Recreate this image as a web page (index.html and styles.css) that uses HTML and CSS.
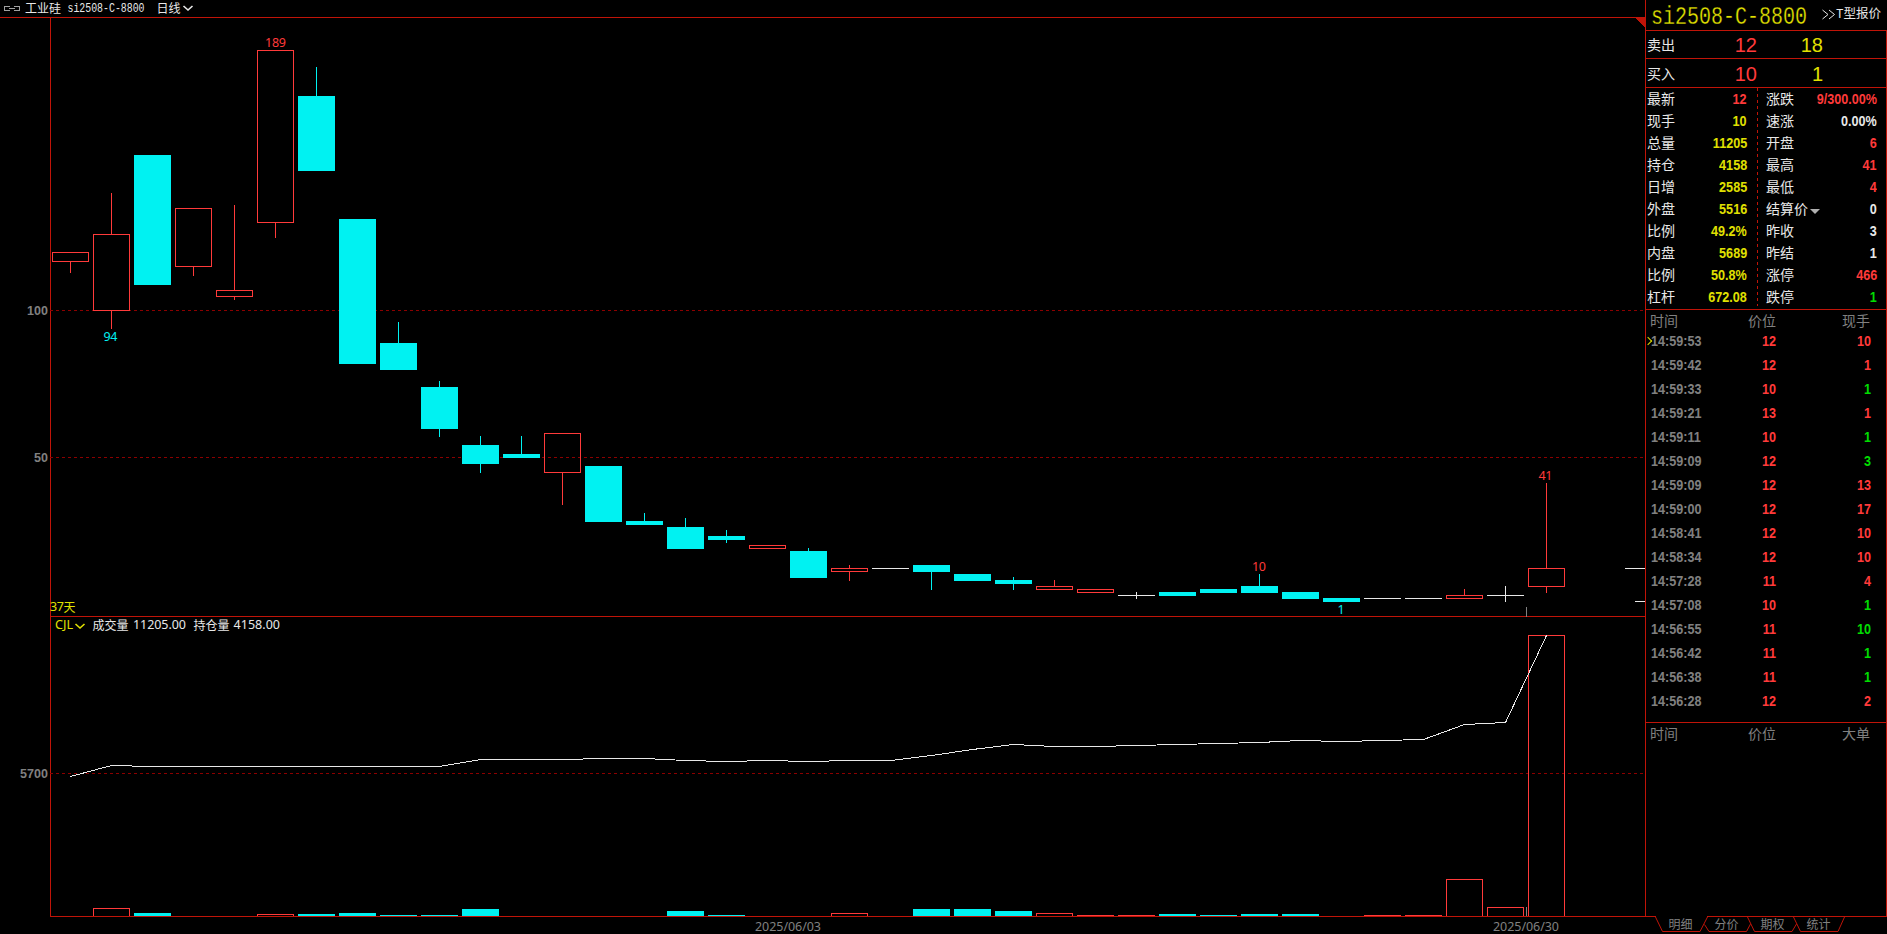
FILE: index.html
```html
<!DOCTYPE html>
<html lang="zh-CN">
<head>
<meta charset="utf-8">
<title>si2508-C-8800</title>
<link rel="stylesheet" href="styles.css">
</head>
<body>
<div class="app">
  <main class="main">
    <section class="chart-pane">
      <svg class="chart" width="1645" height="917" viewBox="0 0 1645 917">
        <!-- header -->
        <g class="link-icon"><path d="M10 6.500H4.500V10.500H10M14 6.500H19.500V10.500H14M9 8.500H15"/></g>
        <text class="cjk white" x="25" y="12.500" textLength="36">工业硅</text>
        <text class="code white" x="67.500" y="12" textLength="77" lengthAdjust="spacingAndGlyphs">si2508-C-8800</text>
        <text class="cjk white" x="156.500" y="12.500" textLength="24">日线</text>
        <path class="chevron white-line" d="M183.500 6L188 10L192.500 6"/>
        <!-- frame and grid -->
        <path class="frame" d="M0 17.500H1645M50.500 17V917M50 616.500H1645M50 916.500H1645"/>
        <path class="flag" d="M1635 17H1645V28Z"/>
        <path class="grid" d="M50 310.500H1643M50 457.500H1643M50 773.500H1643"/>
        <text class="axis" x="27" y="315" textLength="21">100</text>
        <text class="axis" x="34" y="462" textLength="14">50</text>
        <text class="axis" x="20" y="778" textLength="28">5700</text>
        <!-- falling candles -->
        <path class="down" d="M134 155h37v130h-37zM298 96h37v75h-37zM339 219h37v145h-37zM380 343h37v27h-37zM421 387h37v42h-37zM462 445h37v19h-37zM503 454h37v4h-37zM585 466h37v56h-37zM626 521h37v4h-37zM667 527h37v22h-37zM708 536h37v4h-37zM790 551h37v27h-37zM913 565h37v7h-37zM954 574h37v7h-37zM995 580h37v4h-37zM1159 592h37v4h-37zM1200 589h37v4h-37zM1241 586h37v7h-37zM1282 592h37v7h-37zM1323 598h37v4h-37z"/>
        <path class="down-line" d="M316.500 67V96M398.500 322V343M439.500 381V437M480.500 436V473M521.500 436V454M644.500 513V521M685.500 518V527M726.500 530V543M808.500 548V551M931.500 572V590M1013.500 577V590M1259.500 574V586"/>
        <!-- rising candles -->
        <path class="up" d="M52.500 252.500h36v9h-36zM93.500 234.500h36v76h-36zM175.500 208.500h36v58h-36zM216.500 290.500h36v6h-36zM257.500 50.500h36v172h-36zM544.500 433.500h36v39h-36zM749.500 545.500h36v3h-36zM831.500 568.500h36v3h-36zM1036.500 586.500h36v3h-36zM1077.500 589.500h36v3h-36zM1446.500 595.500h36v3h-36zM1528.500 568.500h36v18h-36z"/>
        <path class="up" d="M70.500 262V273M111.500 193V234M111.500 311V329M193.500 267V276M234.500 205V290M234.500 297V300M275.500 223V238M562.500 473V505M849.500 565V568M849.500 572V581M1054.500 580V586M1464.500 589V595M1546.500 483V568M1546.500 587V593"/>
        <!-- flat candles and last-price marks -->
        <path class="white-line" d="M872 568.500h37M1118 595.500h37M1136.500 592v7M1364 598.500h37M1405 598.500h37M1487 595.500h37M1505.500 586v16M1625 568.500h20M1635 601.500h10"/>
        <path class="tick" d="M1526.500 607v10M1526.500 907v9"/>
        <text class="num red" x="265" y="47" textLength="21">189</text>
        <text class="num cyan" x="103.500" y="341" textLength="14">94</text>
        <text class="num red" x="1252" y="571" textLength="14">10</text>
        <text class="num cyan" x="1337.500" y="614">1</text>
        <text class="num red" x="1538.500" y="480" textLength="14">41</text>
        <text class="num yellow" x="50" y="611" textLength="14">37</text>
        <text class="cjk yellow" x="63.500" y="612">天</text>
        <!-- volume pane -->
        <text class="num yellow" x="55" y="629" textLength="18" lengthAdjust="spacingAndGlyphs">CJL</text>
        <path class="chevron yellow-line" d="M75.500 624L80 628L84.500 624"/>
        <text class="cjk white" x="92.500" y="630" textLength="36">成交量</text>
        <text class="num white" x="133" y="629" textLength="53">11205.00</text>
        <text class="cjk white" x="193.500" y="630" textLength="36">持仓量</text>
        <text class="num white" x="233.500" y="629" textLength="46.500">4158.00</text>
        <path class="down" d="M134 913h37v3h-37zM298 914h37v2h-37zM339 913h37v3h-37zM380 915h37v1h-37zM421 915h37v1h-37zM462 909h37v7h-37zM667 911h37v5h-37zM708 915h37v1h-37zM913 909h37v7h-37zM954 909h37v7h-37zM995 911h37v5h-37zM1159 914h37v2h-37zM1200 915h37v1h-37zM1241 914h37v2h-37zM1282 914h37v2h-37z"/>
        <path class="up" d="M93.500 916V908.500h36V916M257.500 916V914.500h36V916M831.500 916V913.500h36V916M1036.500 916V913.500h36V916M1077 915.500h37M1118 915.500h37M1364 915.500h37M1405 915.500h37M1446.500 916V879.500h36V916M1487.500 916V907.500h36V916M1528.500 916V635.500h36V916"/>
        <polyline class="white-line" points="70.500,776.500 111.500,765.500 152.500,766.500 439.500,766.500 480.500,759.500 562.500,759.500 603.500,758.500 644.500,758.500 685.500,760.500 726.500,761.500 767.500,760.500 808.500,761.500 849.500,760.500 890.500,760.500 931.500,755.500 972.500,749.500 1013.500,744.500 1054.500,746.500 1095.500,746.500 1136.500,745.500 1177.500,744.500 1218.500,743.500 1259.500,742.500 1300.500,740.500 1341.500,741.500 1382.500,740.500 1423.500,739.500 1464.500,724.500 1505.500,722.500 1546.500,635.500"/>
      </svg>
    </section>
    <aside class="side">
      <header class="title">
        <svg class="title-code" width="158" height="30" viewBox="0 0 158 30"><text class="symbol" x="0" y="24" textLength="156" lengthAdjust="spacingAndGlyphs">si2508-C-8800</text></svg>
        <span class="t-link"><svg width="14" height="12" viewBox="0 0 14 12"><path class="arrows" d="M0.500 1L6 5.500L0.500 10M7 1L12.500 5.500L7 10"/></svg>T型报价</span>
      </header>
      <div class="panel">
        <div class="quote ask"><span class="label">卖出</span><span class="big red">12</span><span class="big yellow">18</span></div>
        <div class="quote bid"><span class="label">买入</span><span class="big red">10</span><span class="big yellow">1</span></div>
        <div class="stats">
          <dl class="stat-col left">
            <div><dt>最新</dt><dd class="red">12</dd></div>
            <div><dt>现手</dt><dd class="yellow">10</dd></div>
            <div><dt>总量</dt><dd class="yellow">11205</dd></div>
            <div><dt>持仓</dt><dd class="yellow">4158</dd></div>
            <div><dt>日增</dt><dd class="yellow">2585</dd></div>
            <div><dt>外盘</dt><dd class="yellow">5516</dd></div>
            <div><dt>比例</dt><dd class="yellow">49.2%</dd></div>
            <div><dt>内盘</dt><dd class="yellow">5689</dd></div>
            <div><dt>比例</dt><dd class="yellow">50.8%</dd></div>
            <div><dt>杠杆</dt><dd class="yellow">672.08</dd></div>
          </dl>
          <svg class="divider" width="1" height="218"><path d="M.5 0V218"/></svg>
          <dl class="stat-col right">
            <div><dt>涨跌</dt><dd class="red">9/300.00%</dd></div>
            <div><dt>速涨</dt><dd class="white">0.00%</dd></div>
            <div><dt>开盘</dt><dd class="red">6</dd></div>
            <div><dt>最高</dt><dd class="red">41</dd></div>
            <div><dt>最低</dt><dd class="red">4</dd></div>
            <div><dt>结算价<i class="caret"></i></dt><dd class="white">0</dd></div>
            <div><dt>昨收</dt><dd class="white">3</dd></div>
            <div><dt>昨结</dt><dd class="white">1</dd></div>
            <div><dt>涨停</dt><dd class="red">466</dd></div>
            <div><dt>跌停</dt><dd class="green">1</dd></div>
          </dl>
        </div>
        <div class="ticks">
          <div class="tick-head"><span>时间</span><span>价位</span><span>现手</span></div>
          <div class="tick-row current"><span>14:59:53</span><span class="red">12</span><span class="red">10</span></div>
          <div class="tick-row"><span>14:59:42</span><span class="red">12</span><span class="red">1</span></div>
          <div class="tick-row"><span>14:59:33</span><span class="red">10</span><span class="green">1</span></div>
          <div class="tick-row"><span>14:59:21</span><span class="red">13</span><span class="red">1</span></div>
          <div class="tick-row"><span>14:59:11</span><span class="red">10</span><span class="green">1</span></div>
          <div class="tick-row"><span>14:59:09</span><span class="red">12</span><span class="green">3</span></div>
          <div class="tick-row"><span>14:59:09</span><span class="red">12</span><span class="red">13</span></div>
          <div class="tick-row"><span>14:59:00</span><span class="red">12</span><span class="red">17</span></div>
          <div class="tick-row"><span>14:58:41</span><span class="red">12</span><span class="red">10</span></div>
          <div class="tick-row"><span>14:58:34</span><span class="red">12</span><span class="red">10</span></div>
          <div class="tick-row"><span>14:57:28</span><span class="red">11</span><span class="red">4</span></div>
          <div class="tick-row"><span>14:57:08</span><span class="red">10</span><span class="green">1</span></div>
          <div class="tick-row"><span>14:56:55</span><span class="red">11</span><span class="green">10</span></div>
          <div class="tick-row"><span>14:56:42</span><span class="red">11</span><span class="green">1</span></div>
          <div class="tick-row"><span>14:56:38</span><span class="red">11</span><span class="green">1</span></div>
          <div class="tick-row"><span>14:56:28</span><span class="red">12</span><span class="red">2</span></div>
        </div>
        <div class="big-orders">
          <div class="tick-head"><span>时间</span><span>价位</span><span>大单</span></div>
        </div>
      </div>
    </aside>
  </main>
  <footer class="footer">
    <svg width="1887" height="17" viewBox="0 0 1887 17">
      <text class="num gray" x="755" y="14" textLength="66">2025/06/03</text>
      <text class="num gray" x="1493" y="14" textLength="66">2025/06/30</text>
      <path class="tab-gap" d="M1656 -.5H1707"/>
      <path class="tab-line" d="M1655.500 0L1662.500 14.500H1700L1707.500 0M1704.500 7.500L1709 14.500H1746.500L1750.500 7M1747.500 0L1754.500 14.500H1792L1796.500 7M1793.500 0L1800.500 14.500H1838L1844.500 0"/>
      <text class="cjk gray" x="1668.500" y="11.500" textLength="24">明细</text>
      <text class="cjk gray" x="1714.500" y="11.500" textLength="24">分价</text>
      <text class="cjk gray" x="1760.500" y="11.500" textLength="24">期权</text>
      <text class="cjk gray" x="1806.500" y="11.500" textLength="24">统计</text>
    </svg>
  </footer>
</div>
</body>
</html>
```
FILE: styles.css
```css
:root {
  --line: #c01408;
  --red: #ff3a3a;
  --cyan: #00f2f2;
  --yellow: #e0e000;
  --white: #e8e8e8;
  --gray: #808080;
  --green: #00dc00;
}

* { box-sizing: border-box; }

body {
  margin: 0;
  background: #000;
  color: var(--white);
  font-family: "Liberation Sans", "Noto Sans CJK SC", sans-serif;
  overflow: hidden;
}

.app { width: 1887px; height: 934px; display: flex; flex-direction: column; }
.main { display: flex; height: 917px; }
.chart-pane { width: 1645px; }
.footer { height: 17px; }
svg { display: block; }
.footer svg { overflow: visible; }

.red { color: var(--red); fill: var(--red); }
.cyan { color: var(--cyan); fill: var(--cyan); }
.yellow { color: var(--yellow); fill: var(--yellow); }
.white { color: var(--white); fill: var(--white); }
.gray { color: var(--gray); fill: var(--gray); }
.green { color: var(--green); fill: var(--green); }

/* chart text */
.cjk { font: 12px "Noto Sans CJK SC", sans-serif; }
.num { font: 12.5px "Noto Sans", sans-serif; }
.code { font: 13px "Liberation Mono", monospace; }
.axis { font: bold 12.5px "Liberation Sans", sans-serif; fill: var(--gray); }
.symbol {
  font: 26px "Liberation Mono", monospace;
  fill: var(--yellow);
  stroke: #000;
  stroke-width: .3px;
}

/* chart strokes */
.chart path, .chart polyline { shape-rendering: crispEdges; }
.chart .chevron { shape-rendering: auto; stroke-width: 1.6; }
.frame, .tab-line { fill: none; stroke: var(--line); }
.tab-gap { stroke: #000; }
.flag { fill: var(--line); }
.grid { fill: none; stroke: #8c0000; stroke-dasharray: 3 3; }
.down { fill: var(--cyan); }
.down-line { fill: none; stroke: var(--cyan); }
.up { fill: none; stroke: var(--red); }
.white-line { fill: none; stroke: var(--white); }
.yellow-line { fill: none; stroke: var(--yellow); }
.tick { fill: none; stroke: var(--gray); }
.link-icon { fill: none; stroke: #a0a0a0; }

/* side panel */
.side {
  width: 242px;
  border-left: 1px solid var(--line);
  display: flex;
  flex-direction: column;
}
.title {
  height: 30px;
  display: flex;
  align-items: center;
  padding-left: 5px;
}
.t-link {
  display: flex;
  align-items: center;
  margin-left: 13px;
  font: 12.5px/20px "Liberation Mono", "Noto Sans CJK SC", monospace;
  white-space: nowrap;
}
.arrows { fill: none; stroke: var(--white); }

.panel {
  flex: 1;
  display: flex;
  flex-direction: column;
  border: 1px solid var(--line);
  border-left: 0;
}
.quote {
  display: grid;
  grid-template-columns: 58px 52px 66px;
  align-items: center;
  padding-left: 1px;
  border-bottom: 1px solid var(--line);
}
.ask { height: 28px; }
.bid { height: 29px; padding-top: 1px; }
.label { font: 14px/20px "Noto Sans CJK SC", sans-serif; padding-bottom: 1px; }
.big { font-size: 20px; line-height: 22px; padding-top: 1px; text-align: right; }

.stats { display: flex; height: 222px; border-bottom: 1px solid var(--line); }
.stat-col { margin: 0; }
.stat-col > div {
  height: 22px;
  display: flex;
  align-items: center;
  justify-content: space-between;
}
.left { width: 111px; padding: 0 10px 0 1px; }
.right { width: 128px; padding: 0 9px 0 8px; }
.divider { stroke: var(--line); stroke-dasharray: 3 3; }
dt {
  font: 14px/20px "Noto Sans CJK SC", sans-serif;
  display: flex;
  align-items: center;
  padding-bottom: 2px;
}
dd {
  margin: 0;
  font-size: 14px;
  font-weight: bold;
  transform: scaleX(.9);
  transform-origin: right;
}
.caret {
  margin: 6px 0 0 2px;
  border: 5px solid transparent;
  border-top-color: #b0b0b0;
  border-bottom: 0;
}

.ticks { height: 413px; border-bottom: 1px solid var(--line); }
.tick-head, .tick-row {
  display: grid;
  grid-template-columns: 65px 60px 95px;
  padding-left: 5px;
  align-items: center;
  color: var(--gray);
}
.tick-head {
  height: 19px;
  grid-template-columns: 66px 60px 94px;
  padding-left: 4px;
  font: 14px/20px "Noto Sans CJK SC", sans-serif;
}
.tick-row { height: 24px; font-size: 14px; font-weight: bold; position: relative; }
.tick-row span { transform: scaleX(.9); transform-origin: right; text-align: right; }
.tick-row span:first-child { transform-origin: left; text-align: left; }
.tick-head span + span { text-align: right; }
.current::before {
  content: "";
  position: absolute;
  left: -1px;
  top: 9px;
  width: 5px;
  height: 5px;
  border: solid var(--yellow);
  border-width: 1px 1px 0 0;
  transform: rotate(45deg);
}
.big-orders { flex: 1; }
```
